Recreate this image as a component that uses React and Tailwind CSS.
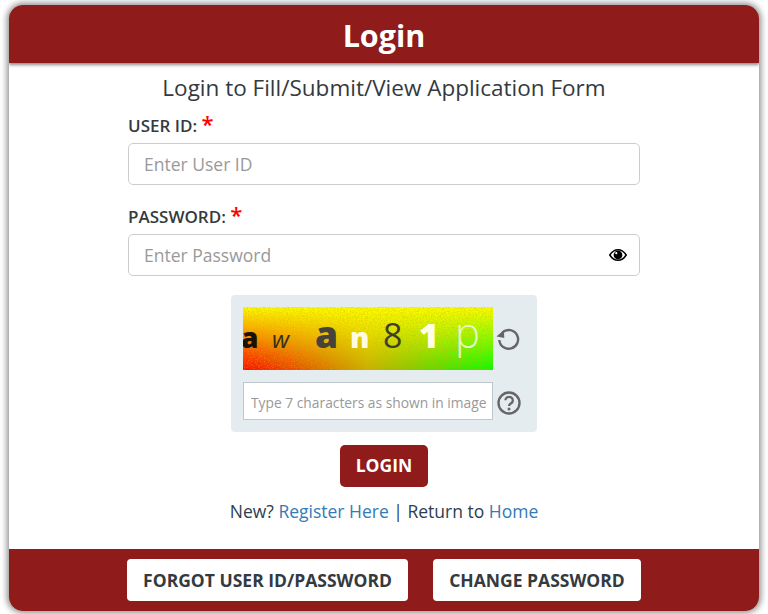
import React from "react";

function Captcha() {
  return (
    <svg width="250" height="63" viewBox="0 0 250 63" className="block shrink-0">
      <defs>
        <linearGradient id="h" x1="0" x2="1" y1="0" y2="0">
          <stop offset="0" stopColor="#ff0000" />
          <stop offset="0.5" stopColor="#c8b000" />
          <stop offset="1" stopColor="#00ff00" />
        </linearGradient>
        <linearGradient id="v" x1="0" x2="0" y1="0" y2="1">
          <stop offset="0" stopColor="#ffff00" />
          <stop offset="0.45" stopColor="#ffff00" stopOpacity="0.55" />
          <stop offset="1" stopColor="#ffff00" stopOpacity="0" />
        </linearGradient>
        <filter id="n" x="0" y="0" width="100%" height="100%">
          <feTurbulence type="fractalNoise" baseFrequency="0.7" numOctaves="2" seed="4" />
          <feColorMatrix values="0 0 0 0 0.6  0 0 0 0 0.45  0 0 0 0 0  1.6 0 0 0 -0.62" />
        </filter>
      </defs>
      <rect width="250" height="63" fill="url(#h)" />
      <rect width="250" height="63" fill="url(#v)" />
      <rect width="250" height="63" filter="url(#n)" opacity="0.7" />
      <g fontFamily="'Open Sans', sans-serif">
        <text x="-2" y="41" fontSize="28" fontWeight="800" fill="#1a1208">a</text>
        <text x="29" y="41" fontSize="24" fontStyle="italic" fill="#33301a">w</text>
        <text x="72" y="41" fontSize="37" fontWeight="800" fill="#45433a">a</text>
        <text x="107" y="41" fontSize="29" fontWeight="800" fill="#fffbe0">n</text>
        <text x="140" y="41" fontSize="34" fill="#3f3f2c">8</text>
        <text x="176" y="41" fontSize="34" fontWeight="800" fill="#ffffe8">1</text>
        <text x="212" y="41" fontSize="42" fontWeight="300" fill="#e4f7c8">p</text>
      </g>
    </svg>
  );
}

function Refresh() {
  return (
    <svg width="26" height="26" viewBox="0 0 26 26" fill="none" stroke="#666" strokeWidth="2.4" className="block">
      <path d="M7.500 7.300A9.400 9.400 0 1 1 4.300 15" />
      <path d="M1.500 11.500 8.800 5 9.300 13Z" fill="#666" stroke="none" />
    </svg>
  );
}

function Help() {
  return (
    <svg width="24" height="24" viewBox="0 0 24 24" className="block">
      <circle cx="12" cy="12" r="10.500" fill="none" stroke="#666" strokeWidth="2.400" />
      <path d="M8.400 9.300a3.700 3.500 0 1 1 5.700 3c-1.300.8-2.100 1.400-2.100 2.800" fill="none" stroke="#666" strokeWidth="2.300" />
      <circle cx="12" cy="18" r="1.500" fill="#666" />
    </svg>
  );
}

function Eye() {
  return (
    <svg width="18" height="14" viewBox="0 0 18 14" className="block">
      <path d="M.8 7C3 3.400 5.800 1.700 9 1.700S15 3.400 17.200 7C15 10.600 12.200 12.300 9 12.300S3 10.600.8 7Z" fill="#fff" stroke="#000" strokeWidth="1.500" />
      <circle cx="9" cy="7" r="4.400" fill="#000" />
      <circle cx="7.300" cy="5.200" r="1.100" fill="#fff" />
    </svg>
  );
}

export default function App() {
  return (
    <div className="w-[768px] h-[614px] bg-white pt-[5px] px-[9px] font-['Open_Sans',sans-serif] text-[#343a40]">
      <div className="w-[750px] h-[606px] rounded-[14px] bg-white shadow-[0_0_6px_2px_rgba(0,0,0,0.45)] flex flex-col overflow-hidden">
        <div className="h-[58px] shrink-0 bg-[#8f1b1a] shadow-[0_2px_3px_rgba(0,0,0,0.45)] flex items-center justify-center pt-[3px] text-white text-[30.500px] font-bold relative">
          Login
        </div>
        <div className="flex-1 flex flex-col items-center">
          <div className="mt-[9px] h-[32px] leading-[32px] text-[22.500px] text-center">
            Login to Fill/Submit/View Application Form
          </div>
          <div className="w-[512px] mt-[7px]">
            <label className="block h-[32px] leading-[30px] text-[17px] font-semibold">
              USER ID: <span className="text-[#ff0000] text-[22px] font-semibold leading-none">*</span>
            </label>
            <input
              readOnly
              placeholder="Enter User ID"
              className="block w-full h-[42px] border border-[#ccc] rounded-[5px] px-[15px] text-[17.500px] text-[#333] placeholder:text-[#999] outline-none bg-white"
            />
            <label className="block mt-[17px] h-[32px] leading-[30px] text-[17px] font-semibold">
              PASSWORD: <span className="text-[#ff0000] text-[22px] font-semibold leading-none">*</span>
            </label>
            <div className="relative">
              <input
                readOnly
                placeholder="Enter Password"
                className="block w-full h-[42px] border border-[#ccc] rounded-[5px] px-[15px] text-[17.500px] text-[#333] placeholder:text-[#999] outline-none bg-white"
              />
              <div className="absolute right-[13px] top-[14px]">
                <Eye />
              </div>
            </div>
          </div>
          <div className="w-[306px] h-[137px] mt-[19px] bg-[#e5ecf0] rounded-[4px] pt-[12px] pl-[12px] shrink-0">
            <div className="flex items-center">
              <Captcha />
              <div className="ml-[2px] mt-[-1px]"><Refresh /></div>
            </div>
            <div className="flex items-center mt-[12px]">
              <input
                readOnly
                placeholder="Type 7 characters as shown in image"
                className="block w-[250px] h-[38px] border border-[#bfc8cc] pl-[7px] pr-0 pt-[2px] text-[13.800px] placeholder:text-[#999] outline-none bg-white"
              />
              <div className="ml-[4px] mt-[4px]"><Help /></div>
            </div>
          </div>
          <button className="mt-[13px] w-[88px] h-[42px] pb-[2px] bg-[#8f1b1a] text-white text-[17.500px] font-bold rounded-[5px]">
            LOGIN
          </button>
          <div className="mt-[10px] h-[28px] leading-[28px] text-[17.500px] text-[#2c3e50]">
            New? <span className="text-[#337ab7]">Register Here</span> | Return to <span className="text-[#337ab7]">Home</span>
          </div>
        </div>
        <div className="h-[62px] shrink-0 bg-[#8f1b1a] flex items-start pt-[10px] pl-[118px] gap-[25px]">
          <button className="w-[281px] h-[42px] bg-white rounded-[4px] text-[17.500px] font-bold text-[#343a40]">
            FORGOT USER ID/PASSWORD
          </button>
          <button className="w-[208px] h-[42px] bg-white rounded-[4px] text-[17.500px] font-bold text-[#343a40]">
            CHANGE PASSWORD
          </button>
        </div>
      </div>
    </div>
  );
}
